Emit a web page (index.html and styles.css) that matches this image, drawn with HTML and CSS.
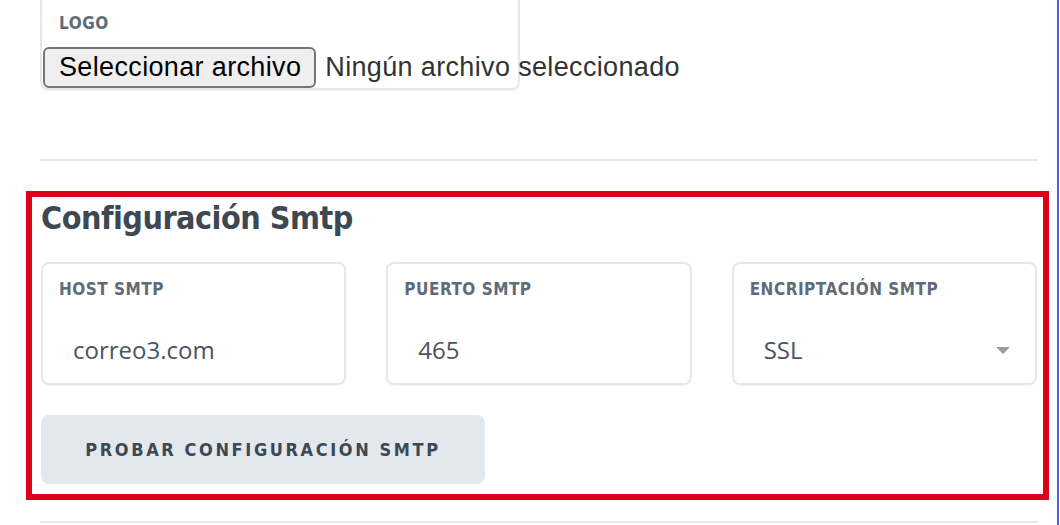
FILE: index.html
```html
<!DOCTYPE html>
<html lang="es">
<head>
<meta charset="utf-8">
<title>Configuración Smtp</title>
<link rel="stylesheet" href="styles.css">
</head>
<body>
<div class="frame">
  <div class="content">
    <div class="logo-card">
      <div class="label">LOGO</div>
      <div class="file-input">
        <span class="file-btn">Seleccionar archivo</span>
        <span class="file-name">Ningún archivo seleccionado</span>
      </div>
    </div>
    <div class="rule"></div>
    <section class="smtp">
      <h2 class="title">Configuración Smtp</h2>
      <div class="fields">
        <div class="card">
          <div class="label">HOST SMTP</div>
          <div class="value">correo3.com</div>
        </div>
        <div class="card">
          <div class="label">PUERTO SMTP</div>
          <div class="value">465</div>
        </div>
        <div class="card">
          <div class="label">ENCRIPTACIÓN SMTP</div>
          <div class="value select">
            <span>SSL</span>
            <svg class="caret" width="16" height="8" viewBox="0 0 16 8"><path d="M1 0H15L8 7Z" fill="#9b9b9b"/></svg>
          </div>
        </div>
      </div>
      <button class="test-btn">PROBAR CONFIGURACIÓN SMTP</button>
    </section>
    <div class="rule bottom"></div>
  </div>
</div>
</body>
</html>
```
FILE: styles.css
```css
* { box-sizing: border-box; }
html, body { margin: 0; padding: 0; background: #fff; }
.frame {
  width: 1059px;
  height: 525px;
  overflow: hidden;
  border-right: 2px solid #4767c9;
}
.content {
  padding: 0 19px 0 40px;
}
.label {
  font-family: "DejaVu Sans Condensed", "DejaVu Sans", sans-serif;
  font-weight: bold;
  font-size: 17px;
  letter-spacing: 0.5px;
  line-height: 20px;
  color: #5f6b77;
}
.logo-card {
  width: 480px;
  height: 90px;
  border: 2px solid #e3e8ee;
  border-top: none;
  border-radius: 0 0 8px 8px;
  padding-top: 13px;
  box-shadow: 0 1px 1px rgba(0,0,0,0.04);
}
.logo-card .label { padding-left: 17px; }
.file-input {
  margin-top: 14px;
  margin-left: 1px;
  display: flex;
  align-items: center;
  white-space: nowrap;
  font-family: "Liberation Sans", Arial, sans-serif;
  font-size: 27px;
  letter-spacing: 0.35px;
}
.file-btn {
  display: inline-block;
  height: 41px;
  line-height: 37px;
  padding: 0 13px 0 14px;
  background: #efefef;
  border: 2px solid #767676;
  border-radius: 6px;
  color: #000;
}
.file-name {
  margin-left: 9px;
  color: #333;
}
.rule {
  height: 2px;
  background: #e5e9ee;
  margin-top: 69px;
}
.smtp {
  margin: 30px -11px 0 -14px;
  border: 6px solid #dd0019;
  padding: 2px 6px 10px 9px;
}
.title {
  margin: 0;
  font-family: "DejaVu Sans Condensed", "DejaVu Sans", sans-serif;
  font-weight: bold;
  font-size: 32px;
  letter-spacing: -0.5px;
  line-height: 38px;
  color: #3d4852;
}
.fields {
  margin-top: 25px;
  display: grid;
  grid-template-columns: 1fr 1fr 1fr;
  gap: 40px;
}
.card {
  height: 123px;
  border: 2px solid #e3e8ee;
  border-radius: 8px;
  padding: 15px 0 0 16px;
  box-shadow: 0 1px 1px rgba(0,0,0,0.04);
}
.value {
  margin-top: 35px;
  padding-left: 14px;
  padding-right: 24px;
  font-family: "Open Sans", sans-serif;
  font-size: 24px;
  line-height: 32px;
  color: #4a5461;
}
.select {
  display: flex;
  align-items: center;
  justify-content: space-between;
}
.caret { margin-top: 2px; }
.test-btn {
  display: block;
  margin-top: 30px;
  width: 444px;
  height: 69px;
  border: none;
  border-radius: 8px;
  background: #e3e8ee;
  font-family: "DejaVu Sans Condensed", "DejaVu Sans", sans-serif;
  font-weight: bold;
  font-size: 18px;
  letter-spacing: 2.6px;
  color: #3d4852;
  padding: 0;
}
.rule.bottom {
  margin-top: 21px;
}
```
